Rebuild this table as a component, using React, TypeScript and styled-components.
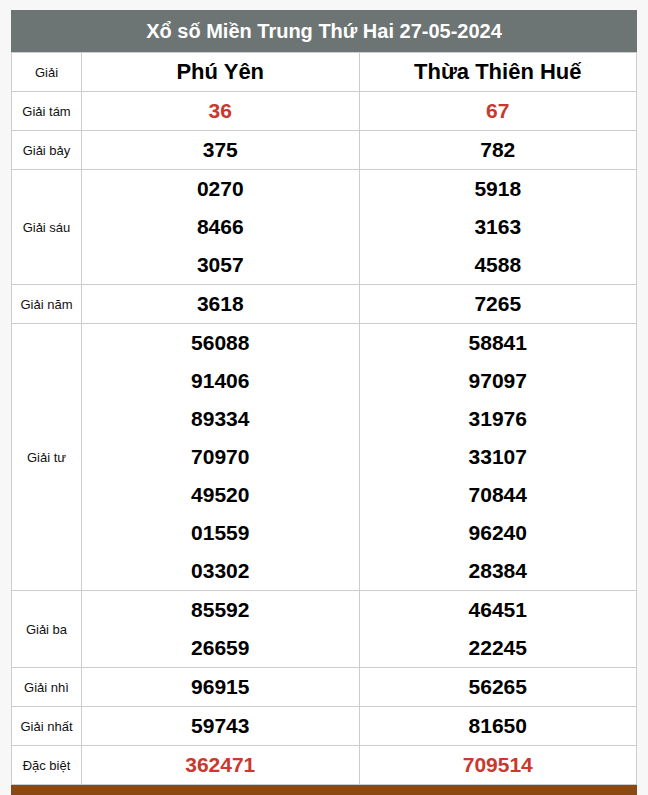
import React from "react";
import styled, { createGlobalStyle } from "styled-components";

const GlobalStyle = createGlobalStyle`
  html, body {
    margin: 0;
    padding: 0;
    background: #f7f7f7;
    font-family: "Liberation Sans", Arial, sans-serif;
  }
`;

const Page = styled.div`
  padding: 10px 11px 0 11px;
`;

const Card = styled.div`
  background: #fff;
`;

const Title = styled.h2`
  margin: 0;
  height: 42px;
  line-height: 42px;
  background: #6c7474;
  color: #fff;
  font-size: 20px;
  font-weight: bold;
  text-align: center;
`;

const Table = styled.table`
  width: 100%;
  border-collapse: collapse;
  table-layout: fixed;
`;

const LabelCell = styled.td`
  width: 69px;
  border: 1px solid #cccccc;
  font-size: 13px;
  color: #111;
  text-align: center;
  vertical-align: middle;
  padding: 0;
`;

const ValueCell = styled.td`
  border: 1px solid #cccccc;
  text-align: center;
  vertical-align: middle;
  padding: 0;
`;

const Province = styled.div`
  height: 38px;
  line-height: 38px;
  font-size: 22px;
  font-weight: bold;
  color: #000;
`;

const Num = styled.div<{ $red?: boolean }>`
  height: 38px;
  line-height: 38px;
  font-size: 21px;
  font-weight: bold;
  color: ${(p) => (p.$red ? "#c9392f" : "#000")};
`;

const Footer = styled.div`
  height: 14px;
  background: #8b4810;
`;

type Row = { label: string; a: string[]; b: string[]; red?: boolean };

const rows: Row[] = [
  { label: "Giải tám", a: ["36"], b: ["67"], red: true },
  { label: "Giải bảy", a: ["375"], b: ["782"] },
  { label: "Giải sáu", a: ["0270", "8466", "3057"], b: ["5918", "3163", "4588"] },
  { label: "Giải năm", a: ["3618"], b: ["7265"] },
  {
    label: "Giải tư",
    a: ["56088", "91406", "89334", "70970", "49520", "01559", "03302"],
    b: ["58841", "97097", "31976", "33107", "70844", "96240", "28384"],
  },
  { label: "Giải ba", a: ["85592", "26659"], b: ["46451", "22245"] },
  { label: "Giải nhì", a: ["96915"], b: ["56265"] },
  { label: "Giải nhất", a: ["59743"], b: ["81650"] },
  { label: "Đặc biệt", a: ["362471"], b: ["709514"], red: true },
];

export default function App() {
  return (
    <>
      <GlobalStyle />
      <Page>
        <Card>
          <Title>Xổ số Miền Trung Thứ Hai 27-05-2024</Title>
          <Table>
            <tbody>
              <tr>
                <LabelCell>Giải</LabelCell>
                <ValueCell>
                  <Province>Phú Yên</Province>
                </ValueCell>
                <ValueCell>
                  <Province>Thừa Thiên Huế</Province>
                </ValueCell>
              </tr>
              {rows.map((r) => (
                <tr key={r.label}>
                  <LabelCell>{r.label}</LabelCell>
                  <ValueCell>
                    {r.a.map((n, i) => (
                      <Num key={i} $red={r.red}>
                        {n}
                      </Num>
                    ))}
                  </ValueCell>
                  <ValueCell>
                    {r.b.map((n, i) => (
                      <Num key={i} $red={r.red}>
                        {n}
                      </Num>
                    ))}
                  </ValueCell>
                </tr>
              ))}
            </tbody>
          </Table>
          <Footer />
        </Card>
      </Page>
    </>
  );
}
